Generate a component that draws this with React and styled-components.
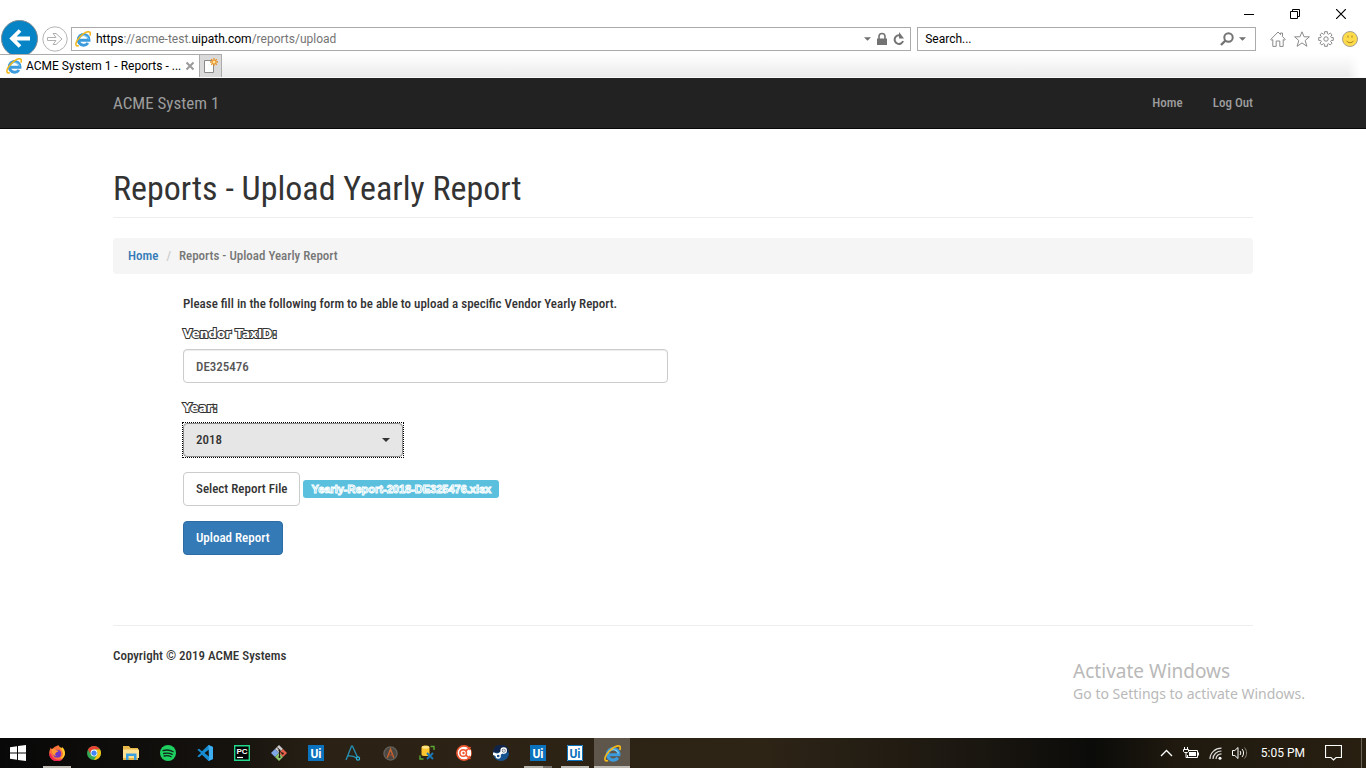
import React, { useState } from "react";
import styled, { createGlobalStyle } from "styled-components";

const GlobalStyle = createGlobalStyle`
  *, *::before, *::after { box-sizing: border-box; }
  html, body { margin: 0; background: #fff; }
  button, input, select { font: inherit; color: inherit; }
  svg { display: block; flex: none; }
`;

const uiFont = `Roboto, "Noto Sans", sans-serif`;
const noticeFont = `"Noto Sans", "Open Sans", sans-serif`;
const siteFont = `"Roboto Condensed", "Liberation Sans Narrow", "Liberation Sans", sans-serif`;

const Screen = styled.div`
  min-height: 100vh;
  display: flex;
  flex-direction: column;
  position: relative;
`;

/* ---------- browser window ---------- */

const BrowserChrome = styled.header`
  font: 12px/16px ${uiFont};
  color: #000;
  background: #fff;
`;

const TopArea = styled.div`
  display: flex;
  height: 54px;
`;

const HistoryButtons = styled.div`
  display: flex;
  align-items: flex-end;
  gap: 3px;
  padding: 0 3px 0 1px;
`;

const PlainButton = styled.button`
  border: 0;
  padding: 0;
  background: none;
  display: flex;
  align-items: center;
  justify-content: center;
`;

const ForwardButton = styled(PlainButton)`
  padding-bottom: 2px;
`;

const TopColumn = styled.div`
  flex: 1;
  min-width: 0;
`;

const WindowControls = styled.div`
  height: 27px;
  display: flex;
  justify-content: flex-end;
  padding-right: 2px;
`;

const WindowButton = styled(PlainButton)`
  width: 46px;
`;

const BarRow = styled.div`
  display: flex;
  align-items: center;
  gap: 6px;
  height: 24px;
  padding-right: 8px;
`;

const Field = styled.div`
  display: flex;
  align-items: center;
  gap: 5px;
  height: 24px;
  min-width: 0;
  border: 1px solid #ababab;
  background: #fff;
  flex: ${(p) => p.$grow} 1 0;
  padding: 0 ${(p) => p.$end}px 0 3px;
`;

const Address = styled.div`
  flex: 1;
  min-width: 0;
  overflow: hidden;
  white-space: nowrap;
  color: #757575;

  b {
    font-weight: 400;
    color: #000;
  }
`;

const SearchInput = styled.input`
  flex: 1;
  min-width: 0;
  border: 0;
  outline: 0;
  padding: 0 0 0 4px;
  background: none;

  &::placeholder {
    color: #000;
    opacity: 1;
  }
`;

const ChromeTools = styled.div`
  display: flex;
  gap: 8px;
  margin-left: 8px;
`;

const TabStrip = styled.div`
  display: flex;
  height: 24px;
  border-bottom: 1px solid #fafafa;
  background: linear-gradient(to left, #fff 6px, transparent 18px),
    linear-gradient(#fff, #ebebeb);
`;

const Tab = styled.div`
  display: flex;
  align-items: center;
  gap: 4px;
  width: 200px;
  padding: 0 5px 0 6px;
  border: 1px solid #ababab;
  border-width: 1px 1px 0 0;
  background: #fff;

  span {
    flex: 1;
    white-space: nowrap;
  }
`;

const NewTab = styled(PlainButton)`
  width: 22px;
  border: 1px solid #ababab;
  border-width: 1px 1px 0 0;
  background: #dadada;
`;

/* ---------- web page ---------- */

const Page = styled.main`
  flex: 1;
  font: 500 13px/20px ${siteFont};
  color: #333;
`;

const Container = styled.div`
  max-width: 1170px;
  margin: 0 auto;
  padding: 0 15px;
`;

const SiteNav = styled.nav`
  background: #222;
  border-bottom: 1px solid #080808;
`;

const NavInner = styled(Container)`
  display: flex;
  align-items: center;
  justify-content: space-between;
  height: 50px;
`;

const NavLink = styled.a`
  color: #9d9d9d;
  text-decoration: none;
  font-size: ${(p) => (p.$brand ? 17 : 13)}px;
  font-weight: ${(p) => (p.$brand ? 400 : 500)};
`;

const NavLinks = styled.div`
  display: flex;
  gap: 30px;
`;

const Title = styled.h1`
  margin: 40px 0 20px;
  padding-bottom: 10px;
  border-bottom: 1px solid #eee;
  font-size: 34px;
  line-height: 38px;
  font-weight: 400;
`;

const Breadcrumb = styled.ol`
  display: flex;
  margin: 0 0 20px;
  padding: 8px 15px;
  list-style: none;
  background: #f5f5f5;
  border-radius: 4px;
  color: #777;

  a {
    color: #337ab7;
    text-decoration: none;
  }

  li + li::before {
    content: "/";
    padding: 0 8px;
    color: #ccc;
  }
`;

const ReportForm = styled.form`
  max-width: 555px;
  padding-left: 70px;

  p {
    margin: 0 0 10px;
    white-space: nowrap;
  }
`;

const Group = styled.div`
  margin-bottom: 15px;
`;

const FieldLabel = styled.label`
  display: block;
  width: max-content;
  margin-bottom: 5px;
  color: #fff;
  font-family: "DejaVu Sans", sans-serif;
  font-size: 12px;
  font-weight: 700;
  paint-order: stroke fill;
  -webkit-text-stroke: 2px #333;
`;

const TextInput = styled.input`
  display: block;
  width: 100%;
  height: 34px;
  padding: 6px 12px;
  border: 1px solid #ccc;
  border-radius: 4px;
  box-shadow: inset 0 1px 1px rgba(0, 0, 0, 0.075);
  color: #555;
  background: #fff;
`;

const YearSelect = styled.div`
  display: grid;
  width: 220px;
  align-items: center;
  outline: 1px dotted #000;

  select,
  svg {
    grid-area: 1 / 1;
  }

  svg {
    justify-self: end;
    margin-right: 13px;
    pointer-events: none;
  }

  select {
    appearance: none;
    height: 34px;
    padding: 6px 12px;
    border: 1px solid #8c8c8c;
    border-radius: 4px;
    background: #e6e6e6;
  }
`;

const FileRow = styled(Group)`
  display: flex;
  align-items: center;
  gap: 3px;
`;

const Button = styled.button`
  height: 34px;
  padding: 6px 12px;
  border: 1px solid ${(p) => (p.$primary ? "#2e6da4" : "#ccc")};
  border-radius: 4px;
  background: ${(p) => (p.$primary ? "#337ab7" : "#fff")};
  color: ${(p) => (p.$primary ? "#fff" : "#333")};
  white-space: nowrap;
`;

const FileBadge = styled.span`
  padding: 0 8px;
  border-radius: 3px;
  background: #5bc0de;
  color: #5bc0de;
  font: 700 11px/18px "Liberation Sans", Arial, sans-serif;
  -webkit-text-stroke: 1px #fff;
`;

const Footer = styled.footer`
  margin-top: 70px;
  padding-top: 20px;
  border-top: 1px solid #eee;
`;

const Watermark = styled.aside`
  position: absolute;
  right: 61px;
  bottom: 64px;
  color: #b9b9b9;
  font: 14px/20px ${noticeFont};

  strong {
    display: block;
    font-size: 19px;
    line-height: 26px;
    font-weight: 400;
  }
`;

/* ---------- taskbar ---------- */

const Taskbar = styled.footer`
  display: flex;
  align-items: stretch;
  height: 30px;
  background: linear-gradient(90deg, #080808 0, #15120e 17%, #2b2215 24%, #2d2416 56%, #1a1610 72%, #0b0b09 80%, #1f190f 86%, #281f11 100%);
  color: #fff;
  font: 12px/16px ${uiFont};
`;

const TaskButton = styled(PlainButton)`
  width: 36px;
  margin-right: ${(p) => (p.$start ? 3 : 1)}px;
  background: ${(p) => (p.$active ? "#5e564b" : "none")};
  position: relative;

  &::after {
    content: ${(p) => (p.$running ? '""' : "none")};
    position: absolute;
    bottom: 0;
    left: ${(p) => (p.$active ? 0 : 4)}px;
    right: ${(p) => (p.$active ? 0 : 4)}px;
    height: 2px;
    background: ${(p) => (p.$stack ? "linear-gradient(90deg, #b5b1ab 19px, #77716a 19px)" : "#bdb9b3")};
  }
`;

const Tray = styled.div`
  display: flex;
  align-items: center;
  margin-left: auto;
  gap: 10px;
  padding-right: 4px;
  white-space: nowrap;
`;

const Clock = styled.time`
  margin: 0 10px 0 3px;
`;

const DesktopEdge = styled.span`
  align-self: stretch;
  border-left: 1px solid #6a6458;
  margin-left: 9px;
`;

/* ---------- drawings ---------- */

const Svg = ({ size = 16, w, h, box, children }) => (
  <svg width={w || size} height={h || size} viewBox={box || `0 0 ${w || size} ${h || size}`} fill="none" aria-hidden="true">
    {children}
  </svg>
);

const IeLogo = ({ size = 16 }) => (
  <Svg size={size} box="0 0 16 16">
    <path d="M4.2 9.2H14A5.4 5.4 0 1 0 13 12" stroke="#3b9bdc" strokeWidth="3" />
    <path d="M3.600 8.200A5.200 5.200 0 0 1 13.600 8.200" stroke="#8bd3f6" strokeWidth="1" />
    <path d="M3.800 14.600C.6 16 0 13 2.200 9.300 5.300 4.300 11.500-.2 14.400 1c1.200.6 1.100 2.200.4 3.700" stroke="#f3b71b" strokeWidth="1.600" />
  </Svg>
);

const Back = () => (
  <Svg w={38} h={34}>
    <circle cx="18.500" cy="18.500" r="18" fill="#0684c6" stroke="#7a8a94" />
    <path d="M29 18.500H11M19 10.500l-8 8 8 8" stroke="#fff" strokeWidth="3.800" />
  </Svg>
);

const Forward = () => (
  <Svg size={26}>
    <circle cx="13" cy="13" r="12.200" stroke="#b4b4b4" />
    <path d="M5.500 11.500h8.500l-3-4h3l6 5.500-6 5.500h-3l3-4H5.500z" stroke="#b0b0b0" />
  </Svg>
);

const Caret = ({ color = "#707070", w = 8, h = 4 }) => (
  <Svg w={w} h={h} box="0 0 8 4">
    <path d="M0 0h8L4 4z" fill={color} />
  </Svg>
);

const Lock = () => (
  <Svg w={12} h={14}>
    <path d="M3 7V4.500a3 3 0 0 1 6 0V7" stroke="#737373" strokeWidth="1.600" />
    <path d="M1 6.500h10V13H1z" fill="#737373" />
  </Svg>
);

const Refresh = () => (
  <Svg w={12} h={14}>
    <path d="M7.500 3.600A4.300 4.300 0 1 0 10 9" stroke="#737373" strokeWidth="2" />
    <path d="M6 0v6.500h5z" fill="#737373" />
  </Svg>
);

const SearchGlyph = () => (
  <Svg w={14} h={14}>
    <circle cx="8.500" cy="5.500" r="4.200" stroke="#737373" strokeWidth="2" />
    <path d="M5.500 8.500L1 13" stroke="#737373" strokeWidth="2.400" />
  </Svg>
);

const HomeGlyph = () => (
  <Svg>
    <path d="M.7 8.500L8 1l2.500 2.600V2h2v3.600l2.800 2.900-1.300.8-.8-.7v6.800H9.800V10H6.200v5.400H2.800V8.600l-.8.7z" stroke="#8b8b8b" />
  </Svg>
);

const StarGlyph = () => (
  <Svg>
    <path d="M8 .8l2.100 5h5.300l-4.200 3.700 1.700 5.800L8 11.900l-4.900 3.400 1.700-5.800L.6 5.800h5.300z" stroke="#8b8b8b" />
  </Svg>
);

const GearGlyph = () => (
  <Svg>
    <path d="M6.600.7h2.800v2l1.300.6L12.200 2l1.900 1.900-1.400 1.400.6 1.300h2v2.800h-2l-.6 1.300 1.400 1.400-1.900 1.900-1.500-1.300-1.300.6v2H6.600v-2l-1.300-.6L3.800 14l-1.900-1.900 1.400-1.400-.6-1.300h-2V6.600h2l.6-1.300-1.400-1.400L3.800 2l1.500 1.300 1.300-.6z" stroke="#8b8b8b" />
    <circle cx="8" cy="8" r="2.200" stroke="#8b8b8b" />
  </Svg>
);

const Smile = () => (
  <Svg>
    <circle cx="8" cy="8" r="7.500" fill="#fddb4a" stroke="#a5a192" />
    <path d="M6 4.500v2.200M10 4.500v2.200M4.500 9.800c1.500 2.500 5.500 2.500 7 0" stroke="#a98522" />
  </Svg>
);

const CloseTab = () => (
  <Svg size={10}>
    <path d="M1.500 1.500l7 7m0-7l-7 7" stroke="#9a9a9a" strokeWidth="2" />
  </Svg>
);

const NewTabGlyph = () => (
  <Svg w={15} h={16}>
    <path d="M1.500 2.500h9v12h-9z" fill="#fff" stroke="#8a8a8a" />
    <path d="M11 0v8M7 4h8M8.200 1.200l5.600 5.600M13.800 1.200L8.200 6.800" stroke="#e7942b" strokeWidth="1.300" />
    <circle cx="11" cy="4" r="1.500" fill="#ffe39a" />
  </Svg>
);

const Minimize = () => <Svg size={10}><path d="M0 5.500h10" stroke="#000" /></Svg>;
const Restore = () => <Svg size={10}><path d="M.5 2.500h7v7h-7zM2.500 2.500v-2h7v7h-2" stroke="#000" /></Svg>;
const CloseWindow = () => <Svg size={10}><path d="M0 0l10 10M10 0L0 10" stroke="#000" strokeWidth="1.200" /></Svg>;

const WindowsLogo = () => (
  <Svg><path d="M0 2.200L7 1.200v6.300H0zM8 1l8-1v7.500H8zM0 8.500h7v6.300l-7-1zM8 8.500h8V16l-8-1z" fill="#fff" /></Svg>
);

const Firefox = () => (
  <Svg>
    <path d="M5 2.500C6 1.500 8 .9 9.200 0c.3 1.700 2.200 2.200 3.600 3.600.3-.4.200-.9 0-1.500 1.800 1.500 3 4 3 6.300A7.800 7.800 0 0 1 .2 8.500C.2 6.200.9 4 2 2.400l.6 1.800z" fill="#ff7139" />
    <path d="M9.200 0c.2 2.500 4 4 4.700 8 .4 3-1.300 4.500-3 5.600 4.500-.2 5.300-4 5-6.200-.3-3-2-4.700-3.100-5.300v1.500C11.400 2.200 9.500 1.700 9.200 0z" fill="#ffcd2e" />
    <path d="M.2 8.500a7.800 7.800 0 0 0 13.600 5.200C10 16 3.500 15 2 8.500z" fill="#ed2356" />
    <circle cx="8.200" cy="8.700" r="3.900" fill="#6e35c7" />
    <path d="M2.500 4.500C4.300 3.600 6 4 7 5.200l2.500.5c-.3 1.500-2.200 1-2.600 2.300-1.300.6-1 2.300.8 3-3.200.2-5-3-5.200-6.500z" fill="#ff9a30" />
  </Svg>
);

const Chrome = () => (
  <Svg size={14} box="0 0 16 16">
    <circle cx="8" cy="8" r="8" fill="#34a853" />
    <path d="M1.100 4A8 8 0 0 1 14.900 4H8a4 4 0 0 0-3.500 6z" fill="#ea4335" />
    <path d="M14.900 4A8 8 0 0 1 8 16l3.500-6A4 4 0 0 0 8 4z" fill="#fbc116" />
    <circle cx="8" cy="8" r="3.900" fill="#fff" />
    <circle cx="8" cy="8" r="3" fill="#4285f4" />
  </Svg>
);

const Folder = () => (
  <Svg>
    <path d="M0 1h6l1.500 2H15v12H0z" fill="#e8b74a" />
    <path d="M0 4.500h16V13H0z" fill="#ffe292" />
    <path d="M3 8.500h10.500V15H11v-4H5.500v4H3z" fill="#3aa0de" />
  </Svg>
);

const Spotify = () => (
  <Svg>
    <circle cx="8" cy="8" r="8" fill="#1ed05f" />
    <path d="M3 5.700c3.400-1.100 7.200-.7 10.200 1M3.600 8.500c2.900-.8 6-.5 8.600.9M4.200 11c2.400-.6 4.800-.4 6.900.8" stroke="#10271a" strokeWidth="1.300" strokeLinecap="round" />
  </Svg>
);

const VsCode = () => (
  <Svg>
    <path d="M11.500 0L16 2v12l-4.500 2L5 9.800 2 12.200.3 11.300 4 8 .3 4.700 2 3.800l3 2.400zM12 4.500L7.500 8l4.500 3.500z" fill="#168bd2" />
    <path d="M11.500 0L16 2v12l-4.500 2 .5-2z" fill="#3daef2" />
  </Svg>
);

const PyCharm = () => (
  <Svg>
    <path d="M.7.7h14.600v14.600H.7z" fill="#000" stroke="#21d789" strokeWidth="1.400" />
    <text x="2.500" y="9" fontFamily="Liberation Sans" fontWeight="700" fontSize="8" fill="#fff">PC</text>
    <path d="M3 12.500h6" stroke="#fff" strokeWidth="1.200" />
  </Svg>
);

const GitBash = () => (
  <Svg>
    <path d="M8 0l4 4-4 4-4-4z" fill="#ccc" />
    <path d="M4 4l4 4-4 4-4-4z" fill="#7fa7e6" />
    <path d="M12 4l4 4-4 4-4-4z" fill="#e65f4b" />
    <path d="M8 8l4 4-4 4-4-4z" fill="#8bc56d" />
    <path d="M6.300 2.500L8.500 5v7M8.500 6l3 2.500" stroke="#20180f" />
    <circle cx="8.500" cy="12" r="1.100" fill="#20180f" />
    <circle cx="11.700" cy="8.500" r="1.100" fill="#20180f" />
    <circle cx="8.500" cy="5.500" r="1.100" fill="#20180f" />
  </Svg>
);

const UiPath = ({ light }) => (
  <Svg>
    <path d="M0 0h16v16H0z" fill={light ? "#fff" : "#0b72bd"} />
    {light && <path d="M.5.500h15v15H.5z" stroke="#0b72bd" />}
    <text x="8" y="12.500" textAnchor="middle" fontFamily="Roboto" fontWeight="700" fontSize="12" fill={light ? "#0b72bd" : "#fff"}>Ui</text>
  </Svg>
);

const Anaconda = () => (
  <Svg>
    <path d="M1 15L6.500 1.200h1l5 11M2.500 11c3-.4 5.500-.5 9 2" stroke="#2590b4" strokeWidth="1.300" />
    <circle cx="13" cy="13.500" r="1.600" stroke="#28b4dd" strokeWidth="1.200" />
  </Svg>
);

const Automation = () => (
  <Svg size={15} box="0 0 16 16">
    <circle cx="8" cy="8" r="7" fill="#4a4641" stroke="#66625b" strokeWidth="1.400" />
    <path d="M4.500 12.500L8 3.500l3.500 9" stroke="#c8662e" strokeWidth="1.500" />
    <path d="M6 10c1.500-.8 3-.6 4.500.2" stroke="#a54a30" strokeWidth="1.200" />
  </Svg>
);

const Database = () => (
  <Svg>
    <path d="M2.500 2.500c0-2.600 8-2.600 8 0v7c0 2-8 2-8 0z" fill="#fcc52f" />
    <ellipse cx="6.500" cy="2.300" rx="3.600" ry="1.400" fill="#ffe68d" />
    <path d="M8 8l6 6M14 8l-6 6" stroke="#1a78ba" strokeWidth="1.800" />
    <path d="M11.500 1.500H15V5M1 10.500V14h3.500" stroke="#5ba735" strokeWidth="1.400" />
  </Svg>
);

const Orbit = () => (
  <Svg>
    <circle cx="8" cy="8" r="7.100" fill="#fff" stroke="#f0562f" strokeWidth="1.600" />
    <path d="M14.500 2.200L7 8l7.500 5.800" stroke="#f0562f" strokeWidth="1.600" />
    <circle cx="7.200" cy="8" r="3.300" fill="#fff" stroke="#f0562f" strokeWidth="1.500" />
    <circle cx="7.500" cy="8" r="1.200" fill="#f0562f" />
    <path d="M11.500 7.900l3.500-3.500v7.200z" fill="#fff" />
  </Svg>
);

const Steam = () => (
  <Svg>
    <circle cx="8" cy="8" r="8" fill="#17538e" />
    <path d="M0 7.500a8 8 0 0 1 16 0z" fill="#10244a" />
    <path d="M0 8.500l5 2 5-4.500" stroke="#fff" strokeWidth="2.600" />
    <circle cx="10.700" cy="5.600" r="2.600" fill="#10244a" stroke="#fff" strokeWidth="1.400" />
    <circle cx="10.700" cy="5.600" r="1.500" fill="#ddd" />
    <circle cx="5.200" cy="11" r="2" fill="#17538e" stroke="#fff" strokeWidth="1.300" />
  </Svg>
);

const TrayUp = () => <Svg w={13} h={8}><path d="M1 7l5.500-5.500L12 7" stroke="#fff" strokeWidth="1.300" /></Svg>;

const Battery = () => (
  <Svg w={16} h={12}>
    <path d="M6 3.500h8.500v7H4.500V8" stroke="#fff" />
    <path d="M6 5h7v4H6zM15 5.500h1v3h-1z" fill="#fff" />
    <path d="M1.500 0v2.500M4.500 0v2.500M.5 2.500h5v2l-1 1h-3l-1-1zM3 5.500v5h2" stroke="#fff" />
  </Svg>
);

const Wifi = () => (
  <Svg w={13} h={13}>
    <path d="M1 12C1 6 6 1.200 12.500 1.200M4 12c0-4.500 4-8 8.500-8M7 12c0-3 2.500-5.200 5.500-5.200" stroke="#ddd" strokeWidth="1.200" />
    <circle cx="11" cy="11.300" r="1.500" fill="#fff" />
  </Svg>
);

const Speaker = () => (
  <Svg w={16} h={14}>
    <path d="M.5 4.500h2.300L6 1.500v11l-3.200-3H.500z" stroke="#fff" />
    <path d="M8 5c1 1.200 1 2.800 0 4M10 3c2 2.400 2 5.600 0 8" stroke="#fff" />
    <path d="M12.500 1.500c2.800 3.300 2.800 7.700 0 11" stroke="#8a857a" />
  </Svg>
);

const Notice = () => <Svg w={17} h={16}><path d="M.5.500h16v12h-5.500L8.500 15 6 12.500H.500z" stroke="#fff" strokeWidth="1.200" /></Svg>;

const apps = [
  { name: "Firefox", icon: <Firefox />, running: true },
  { name: "Chrome", icon: <Chrome /> },
  { name: "File Explorer", icon: <Folder /> },
  { name: "Spotify", icon: <Spotify /> },
  { name: "Visual Studio Code", icon: <VsCode /> },
  { name: "PyCharm", icon: <PyCharm /> },
  { name: "Git Bash", icon: <GitBash /> },
  { name: "UiPath Studio", icon: <UiPath /> },
  { name: "Assistant", icon: <Anaconda /> },
  { name: "Automation", icon: <Automation /> },
  { name: "Database", icon: <Database /> },
  { name: "Orbit", icon: <Orbit /> },
  { name: "Steam", icon: <Steam /> },
  { name: "UiPath Studio window", icon: <UiPath />, running: true, stack: true },
  { name: "UiPath Robot", icon: <UiPath light />, running: true },
  { name: "Internet Explorer", icon: <IeLogo size={17} />, running: true, active: true },
];

export default function App() {
  const [taxId, setTaxId] = useState("DE325476");
  const [year, setYear] = useState("2018");

  return (
    <Screen>
      <GlobalStyle />

      <BrowserChrome>
        <TopArea>
          <HistoryButtons>
            <PlainButton aria-label="Back"><Back /></PlainButton>
            <ForwardButton aria-label="Forward"><Forward /></ForwardButton>
          </HistoryButtons>
          <TopColumn>
            <WindowControls>
              <WindowButton aria-label="Minimize"><Minimize /></WindowButton>
              <WindowButton aria-label="Restore"><Restore /></WindowButton>
              <WindowButton aria-label="Close"><CloseWindow /></WindowButton>
            </WindowControls>
            <BarRow>
              <Field $grow={23} $end={5}>
                <IeLogo />
                <Address><b>https</b>://acme-test.<b>uipath.com</b>/reports/upload</Address>
                <PlainButton aria-label="Address history"><Caret w={7} /></PlainButton>
                <Lock />
                <PlainButton aria-label="Refresh"><Refresh /></PlainButton>
              </Field>
              <Field $grow={9} $end={9}>
                <SearchInput aria-label="Search" placeholder="Search..." />
                <PlainButton aria-label="Run search"><SearchGlyph /></PlainButton>
                <PlainButton aria-label="Search providers"><Caret w={7} /></PlainButton>
              </Field>
              <ChromeTools>
                <PlainButton aria-label="Home page"><HomeGlyph /></PlainButton>
                <PlainButton aria-label="Favorites"><StarGlyph /></PlainButton>
                <PlainButton aria-label="Tools"><GearGlyph /></PlainButton>
                <PlainButton aria-label="Feedback"><Smile /></PlainButton>
              </ChromeTools>
            </BarRow>
          </TopColumn>
        </TopArea>
        <TabStrip>
          <Tab>
            <IeLogo />
            <span>ACME System 1 - Reports - ...</span>
            <PlainButton aria-label="Close tab"><CloseTab /></PlainButton>
          </Tab>
          <NewTab aria-label="New tab"><NewTabGlyph /></NewTab>
        </TabStrip>
      </BrowserChrome>

      <Page>
        <SiteNav>
          <NavInner>
            <NavLink $brand href="#top">ACME System 1</NavLink>
            <NavLinks>
              <NavLink href="#home">Home</NavLink>
              <NavLink href="#logout">Log Out</NavLink>
            </NavLinks>
          </NavInner>
        </SiteNav>
        <Container>
          <Title>Reports - Upload Yearly Report</Title>
          <Breadcrumb>
            <li><a href="#home">Home</a></li>
            <li>Reports - Upload Yearly Report</li>
          </Breadcrumb>
          <ReportForm onSubmit={(e) => e.preventDefault()}>
            <p>Please fill in the following form to be able to upload a specific Vendor Yearly Report.</p>
            <Group>
              <FieldLabel htmlFor="tax-id">Vendor TaxID:</FieldLabel>
              <TextInput id="tax-id" value={taxId} onChange={(e) => setTaxId(e.target.value)} />
            </Group>
            <Group>
              <FieldLabel htmlFor="year">Year:</FieldLabel>
              <YearSelect>
                <select id="year" value={year} onChange={(e) => setYear(e.target.value)}>
                  <option>2017</option>
                  <option>2018</option>
                  <option>2019</option>
                </select>
                <Caret color="#333" />
              </YearSelect>
            </Group>
            <FileRow>
              <Button type="button">Select Report File</Button>
              <FileBadge>Yearly-Report-2018-DE325476.xlsx</FileBadge>
            </FileRow>
            <Button $primary type="submit">Upload Report</Button>
          </ReportForm>
          <Footer>Copyright © 2019 ACME Systems</Footer>
        </Container>
      </Page>

      <Watermark>
        <strong>Activate Windows</strong>
        Go to Settings to activate Windows.
      </Watermark>

      <Taskbar>
        <TaskButton $start aria-label="Start"><WindowsLogo /></TaskButton>
        {apps.map((a) => (
          <TaskButton key={a.name} aria-label={a.name} $running={a.running} $active={a.active} $stack={a.stack}>
            {a.icon}
          </TaskButton>
        ))}
        <Tray>
          <TrayUp />
          <Battery />
          <Wifi />
          <Speaker />
          <Clock>5:05 PM</Clock>
          <Notice />
          <DesktopEdge />
        </Tray>
      </Taskbar>
    </Screen>
  );
}
